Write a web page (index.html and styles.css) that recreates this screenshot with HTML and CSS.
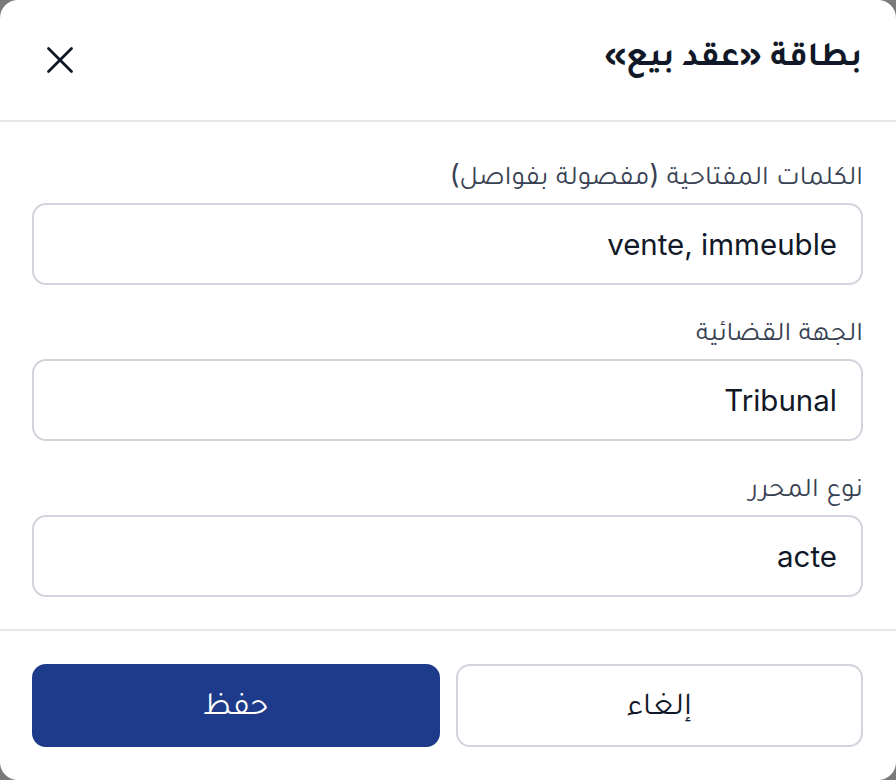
FILE: index.html
```html
<!DOCTYPE html>
<html lang="ar" dir="rtl">
<head>
<meta charset="utf-8">
<title>بطاقة «عقد بيع»</title>
<link rel="stylesheet" href="styles.css">
</head>
<body>
<div class="dialog">
  <header class="dialog-header">
    <h2 class="dialog-title">بطاقة «عقد بيع»</h2>
    <button class="close-btn" type="button" aria-label="إغلاق">
      <svg width="28" height="28" viewBox="0 0 28 28" fill="none" stroke="currentColor" stroke-width="2.8" stroke-linecap="round"><path d="M2.5 2.5 25.5 25.5"/><path d="M25.5 2.5 2.5 25.5"/></svg>
    </button>
  </header>
  <div class="dialog-body">
    <div class="field">
      <label class="field-label">الكلمات المفتاحية (مفصولة بفواصل)</label>
      <input class="field-input" type="text" value="vente, immeuble">
    </div>
    <div class="field">
      <label class="field-label">الجهة القضائية</label>
      <input class="field-input" type="text" value="Tribunal">
    </div>
    <div class="field">
      <label class="field-label">نوع المحرر</label>
      <input class="field-input" type="text" value="acte">
    </div>
  </div>
  <footer class="dialog-footer">
    <button class="btn btn-cancel" type="button">إلغاء</button>
    <button class="btn btn-save" type="button">حفظ</button>
  </footer>
</div>
</body>
</html>
```
FILE: styles.css
```css
* { box-sizing: border-box; }
html, body { margin: 0; padding: 0; }
body {
  background: #7a7a7a;
  font-family: "Inter", "Tajawal", sans-serif;
  width: 896px;
  height: 780px;
  overflow: hidden;
}
.dialog {
  width: 896px;
  height: 780px;
  background: #ffffff;
  border-radius: 18px;
  display: flex;
  flex-direction: column;
}
.dialog-header {
  height: 122px;
  border-bottom: 2px solid #e5e7eb;
  display: flex;
  align-items: center;
  justify-content: space-between;
  padding: 0 34px 0 40px;
}
.dialog-title {
  margin: 0;
  font-family: "Tajawal", "Inter", sans-serif;
  font-size: 34px;
  font-weight: 700;
  color: #111827;
}
.close-btn {
  background: none;
  border: 0;
  padding: 0;
  width: 40px;
  height: 40px;
  display: flex;
  align-items: center;
  justify-content: center;
  color: #111827;
}
.dialog-body {
  padding: 33px 33px 32px 32px;
  display: flex;
  flex-direction: column;
  gap: 26px;
  border-bottom: 2px solid #e5e7eb;
}
.field {
  display: flex;
  flex-direction: column;
}
.field-label {
  font-size: 27px;
  line-height: 40px;
  color: #374151;
  margin-bottom: 8px;
}
.field-input {
  height: 82px;
  border: 2px solid #d1d5db;
  border-radius: 14px;
  padding: 0 24px;
  font-family: "Inter", "Tajawal", sans-serif;
  font-size: 29.5px;
  color: #111827;
  background: #fff;
  direction: rtl;
  outline: none;
}
.dialog-footer {
  padding: 33px 33px 33px 32px;
  display: flex;
  gap: 16px;
}
.btn {
  flex: 1;
  height: 83px;
  border-radius: 14px;
  font-family: "Inter", "Tajawal", sans-serif;
  font-size: 32px;
  cursor: pointer;
}
.btn-cancel {
  background: #fff;
  border: 2px solid #d1d5db;
  color: #111827;
}
.btn-save {
  background: #1e3a8a;
  border: 2px solid #1e3a8a;
  color: #ffffff;
}
```
